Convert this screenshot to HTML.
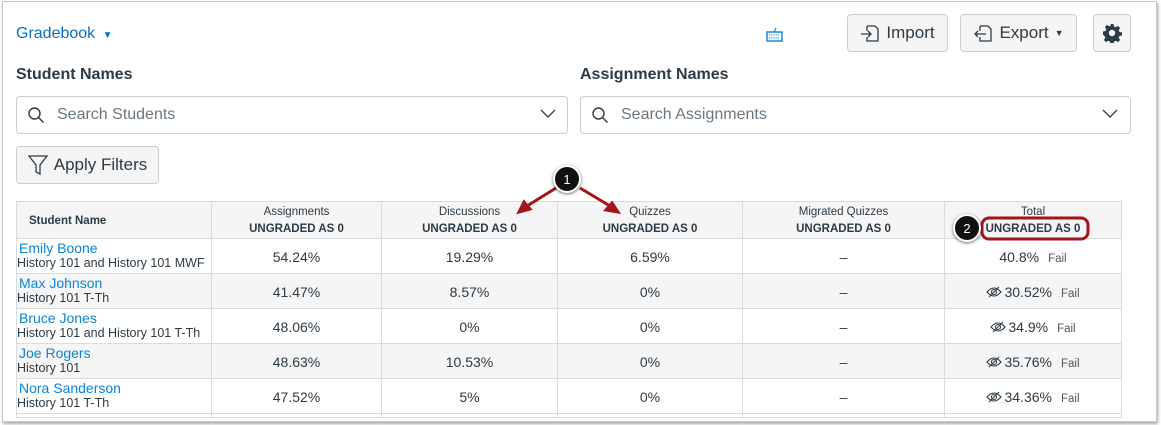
<!DOCTYPE html>
<html><head><style>
*{box-sizing:border-box;margin:0;padding:0}
body{width:1161px;height:425px;background:#fff;font-family:"Liberation Sans",sans-serif;position:relative;overflow:hidden;color:#2d3b45}
.frame{position:absolute;left:2px;top:1px;width:1155px;height:421px;border:1px solid #c8c8c8;box-shadow:1px 2px 3px rgba(0,0,0,.35);background:#fff}
.a{position:absolute}
.btn{position:absolute;background:#f5f5f5;border:1px solid #c7cdd1;border-radius:4px;font-size:17px;color:#2d3b45;display:flex;align-items:center;justify-content:center;gap:6px}
.inp{position:absolute;height:38px;border:1px solid #c7cdd1;border-radius:4px;font-size:16px;color:#6b7780;display:flex;align-items:center;padding-left:40px}
table{position:absolute;left:16px;top:201px;border-collapse:collapse;table-layout:fixed;font-size:14px}
td,th{border:1px solid #d9dcde;text-align:center;height:35px;padding:0;font-weight:normal;padding-top:2px}
th{background:#f5f5f5;height:37px;font-size:11.5px;line-height:17px;color:#2d3b45}
th b{font-weight:bold}
tr.g td{background:#f5f5f5}
td.n{text-align:left;padding-left:0;line-height:15px;font-size:12.5px;padding-top:0}
td.n a{color:#0b84d8;font-size:14px;display:block;padding-left:2px}
.fail{font-size:11.5px;margin-left:9px;color:#4a5660}
.eye{display:inline-block;width:16px;height:12px;vertical-align:-1px;margin-right:2px}
.circ{position:absolute;width:28px;height:28px;border-radius:50%;background:#111;color:#fff;border:2px solid #fff;box-shadow:0 1px 3px rgba(0,0,0,.6);font-size:13px;display:flex;align-items:center;justify-content:center}
</style></head><body>
<div class="frame"></div>
<div class="a" style="left:16px;top:25px;font-size:16px;color:#0770c0">Gradebook <span style="font-size:10px;margin-left:3px">▼</span></div>
<svg class="a" style="left:766px;top:27px" width="17" height="15" viewBox="0 0 17 15"><rect x="1" y="5" width="15" height="9" fill="none" stroke="#0b84d8" stroke-width="1.4"/><path d="M8 5 L10 1" stroke="#0b84d8" stroke-width="1.2"/><path d="M3 8h11M3 11h11" stroke="#0b84d8" stroke-width="1" stroke-dasharray="1.2 1"/></svg>
<div class="btn" style="left:847px;top:14px;width:101px;height:38px"><svg width="20" height="20" viewBox="0 0 20 20" fill="none" stroke="#2d3b45" stroke-width="1.3"><path d="M7 3h8l3 3v12H7v-4M7 8V3"/><path d="M1 11h10M8 8l3 3-3 3"/></svg>Import</div>
<div class="btn" style="left:960px;top:14px;width:117px;height:38px"><svg width="20" height="20" viewBox="0 0 20 20" fill="none" stroke="#2d3b45" stroke-width="1.3"><path d="M7 3h8l3 3v12H7v-4M7 8V3"/><path d="M13 11H2M5 8l-3 3 3 3"/></svg>Export <span style="font-size:9px">▼</span></div>
<div class="btn" style="left:1093px;top:14px;width:38px;height:38px"><svg width="20" height="20" viewBox="0 0 20 20"><path fill="#2d3b45" d="M8.5 1h3l.5 2.5 1.8.8 2.2-1.4 2.1 2.1-1.4 2.2.8 1.8 2.5.5v3l-2.5.5-.8 1.8 1.4 2.2-2.1 2.1-2.2-1.4-1.8.8-.5 2.5h-3l-.5-2.5-1.8-.8-2.2 1.4-2.1-2.1 1.4-2.2-.8-1.8L1 11.5v-3l2.5-.5.8-1.8-1.4-2.2 2.1-2.1 2.2 1.4 1.8-.8zM10 6.8a3.2 3.2 0 1 0 0 6.4 3.2 3.2 0 0 0 0-6.4z"/></svg></div>
<div class="a" style="left:16px;top:66px;font-size:16px;font-weight:bold">Student Names</div>
<div class="a" style="left:580px;top:66px;font-size:16px;font-weight:bold">Assignment Names</div>
<div class="inp" style="left:16px;top:96px;width:552px">Search Students</div>
<div class="inp" style="left:580px;top:96px;width:551px">Search Assignments</div>
<svg class="a" style="left:27px;top:106px" width="18" height="18" viewBox="0 0 18 18" fill="none" stroke="#2d3b45" stroke-width="1.4"><circle cx="7.5" cy="7.5" r="5.5"/><path d="M11.5 11.5l5 5"/></svg>
<svg class="a" style="left:591px;top:106px" width="18" height="18" viewBox="0 0 18 18" fill="none" stroke="#2d3b45" stroke-width="1.4"><circle cx="7.5" cy="7.5" r="5.5"/><path d="M11.5 11.5l5 5"/></svg>
<svg class="a" style="left:540px;top:109px" width="16" height="10" viewBox="0 0 16 10" fill="none" stroke="#2d3b45" stroke-width="1.3"><path d="M1 1l7 7 7-7"/></svg>
<svg class="a" style="left:1102px;top:109px" width="16" height="10" viewBox="0 0 16 10" fill="none" stroke="#2d3b45" stroke-width="1.3"><path d="M1 1l7 7 7-7"/></svg>
<div class="btn" style="left:16px;top:146px;width:143px;height:38px"><svg width="20" height="22" viewBox="0 0 20 22" fill="none" stroke="#2d3b45" stroke-width="1.3"><path d="M1 2h18l-7 9v9l-4-2v-7z"/></svg>Apply Filters</div>
<table>
<colgroup><col style="width:195px"><col style="width:170px"><col style="width:176px"><col style="width:185px"><col style="width:202px"><col style="width:177px"></colgroup>
<tr><th style="text-align:left;padding-left:12px"><b>Student Name</b></th><th>Assignments<br><b>UNGRADED AS 0</b></th><th>Discussions<br><b>UNGRADED AS 0</b></th><th>Quizzes<br><b>UNGRADED AS 0</b></th><th>Migrated Quizzes<br><b>UNGRADED AS 0</b></th><th>Total<br><b>UNGRADED AS 0</b></th></tr>
<tr><td class="n"><a>Emily Boone</a>History 101 and History 101 MWF</td><td>54.24%</td><td>19.29%</td><td>6.59%</td><td>–</td><td>40.8%<span class="fail">Fail</span></td></tr>
<tr class="g"><td class="n"><a>Max Johnson</a>History 101 T-Th</td><td>41.47%</td><td>8.57%</td><td>0%</td><td>–</td><td><svg class="eye" viewBox="0 0 16 12" fill="none" stroke="#2d3b45" stroke-width="1.1"><path d="M1 6q7-8 14 0q-7 8-14 0z"/><circle cx="8" cy="6" r="2.5"/><path d="M3 11L13 1"/></svg>30.52%<span class="fail">Fail</span></td></tr>
<tr><td class="n"><a>Bruce Jones</a>History 101 and History 101 T-Th</td><td>48.06%</td><td>0%</td><td>0%</td><td>–</td><td><svg class="eye" viewBox="0 0 16 12" fill="none" stroke="#2d3b45" stroke-width="1.1"><path d="M1 6q7-8 14 0q-7 8-14 0z"/><circle cx="8" cy="6" r="2.5"/><path d="M3 11L13 1"/></svg>34.9%<span class="fail">Fail</span></td></tr>
<tr class="g"><td class="n"><a>Joe Rogers</a>History 101</td><td>48.63%</td><td>10.53%</td><td>0%</td><td>–</td><td><svg class="eye" viewBox="0 0 16 12" fill="none" stroke="#2d3b45" stroke-width="1.1"><path d="M1 6q7-8 14 0q-7 8-14 0z"/><circle cx="8" cy="6" r="2.5"/><path d="M3 11L13 1"/></svg>35.76%<span class="fail">Fail</span></td></tr>
<tr><td class="n"><a>Nora Sanderson</a>History 101 T-Th</td><td>47.52%</td><td>5%</td><td>0%</td><td>–</td><td><svg class="eye" viewBox="0 0 16 12" fill="none" stroke="#2d3b45" stroke-width="1.1"><path d="M1 6q7-8 14 0q-7 8-14 0z"/><circle cx="8" cy="6" r="2.5"/><path d="M3 11L13 1"/></svg>34.36%<span class="fail">Fail</span></td></tr>
<tr><td style="height:4px;padding:0"></td><td style="height:4px;padding:0"></td><td style="height:4px;padding:0"></td><td style="height:4px;padding:0"></td><td style="height:4px;padding:0"></td><td style="height:4px;padding:0"></td></tr>
</table>
<svg class="a" style="left:0;top:0" width="1161" height="425"><g stroke="#a4141c" stroke-width="3" fill="#a4141c"><path d="M556 188L527 206" fill="none"/><path d="M519 212l5-10 6 7z"/><path d="M580 188L610 206" fill="none"/><path d="M618 212l-12-2 6-7z"/></g><rect x="982" y="218" width="106" height="21" rx="7" fill="none" stroke="#a4141c" stroke-width="3"/></svg>
<div class="circ" style="left:553px;top:165px">1</div>
<div class="circ" style="left:953px;top:214px">2</div>
</body></html>
